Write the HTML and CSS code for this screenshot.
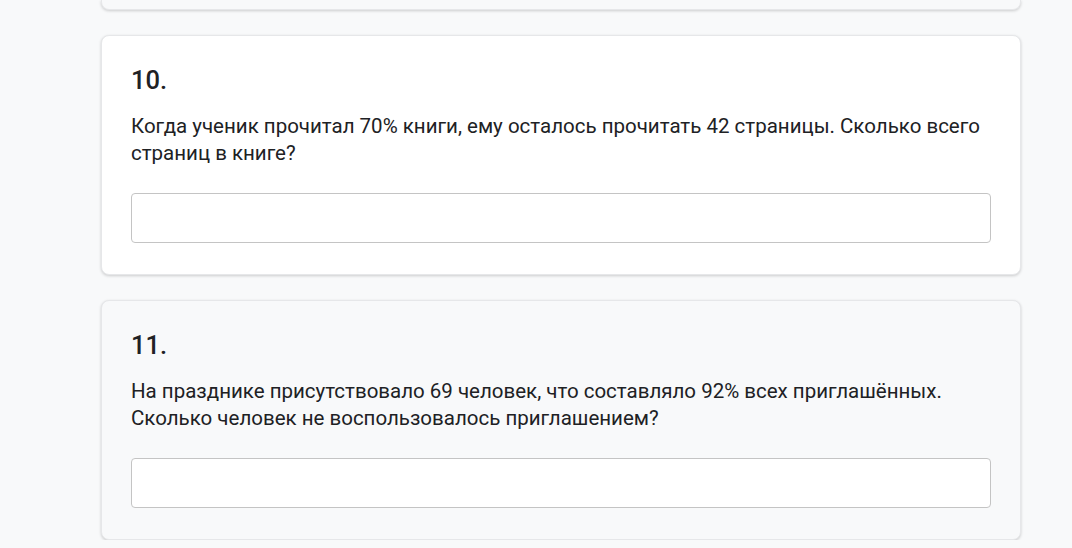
FILE: index.html
```html
<!DOCTYPE html>
<html lang="ru">
<head>
<meta charset="utf-8">
<link rel="stylesheet" href="styles.css">
</head>
<body>
<main class="list">
  <div class="card card-tail"></div>
  <section class="card card-white">
    <h2 class="num">10.</h2>
    <p class="question">Когда ученик прочитал 70% книги, ему осталось прочитать 42 страницы. Сколько всего страниц в книге?</p>
    <input class="answer" type="text">
  </section>
  <section class="card">
    <h2 class="num">11.</h2>
    <p class="question">На празднике присутствовало 69 человек, что составляло 92% всех приглашённых. Сколько человек не воспользовалось приглашением?</p>
    <input class="answer" type="text">
  </section>
</main>
</body>
</html>
```
FILE: styles.css
```css
html, body {
  margin: 0;
  padding: 0;
  background: #f8f9fa;
  font-family: Roboto, "Liberation Sans", sans-serif;
  color: #202124;
  overflow: hidden;
}
.list {
  width: 920px;
  margin-left: 101px;
  display: flex;
  flex-direction: column;
  gap: 25px;
}
.card {
  box-sizing: border-box;
  background: #f8f9fa;
  border: 1px solid #e6e7e9;
  border-radius: 8px;
  box-shadow: 0 1px 3px rgba(0,0,0,0.18);
  padding: 29px 29px 31px 29px;
}
.card-white {
  background: #ffffff;
}
.card-tail {
  height: 10px;
  padding: 0;
  border-top: none;
  border-radius: 0 0 8px 8px;
}
.num {
  margin: 0;
  font-size: 25.5px;
  font-weight: 500;
  line-height: 30px;
  color: #202124;
}
.question {
  margin: 18px 0 26px;
  font-size: 20.5px;
  line-height: 27px;
  color: #202124;
}
.answer {
  display: block;
  box-sizing: border-box;
  width: 100%;
  height: 50px;
  margin: 0;
  border: 1px solid #c4c4c4;
  border-radius: 4px;
  background: #ffffff;
  outline: none;
}
```
